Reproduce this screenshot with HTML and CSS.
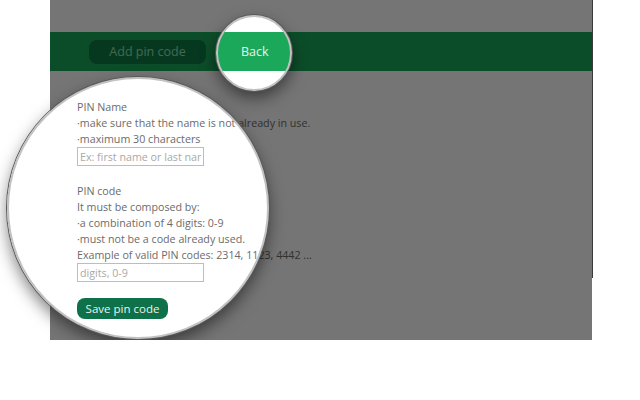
FILE: index.html
```html
<!DOCTYPE html>
<html lang="en">

<head>
    <meta charset="UTF-8">
    <meta name="viewport" content="width=device-width, initial-scale=1.0">
    <title>PIN codes</title>
    <link rel="stylesheet" href="styles.css">
</head>

<body>
    <div class="page">
        <div class="top"></div>
        <div class="nav">
            <a class="btn_add" href="javascript:;">Add pin code</a>
            <a class="btn_back" href="javascript:;">Back</a>
        </div>
        <div class="form">
            <p>PIN Name</p>
            <p>·make sure that the name is not already in use.</p>
            <p>·maximum 30 characters</p>
            <input class="field" type="text" placeholder="Ex: first name or last name">

            <p class="gap">PIN code</p>
            <p>It must be composed by:</p>
            <p>·a combination of 4 digits: 0-9</p>
            <p>·must not be a code already used.</p>
            <p>Example of valid PIN codes: 2314, 1123, 4442 ...</p>
            <input class="field" type="text" placeholder="digits, 0-9">

            <a class="btn_save" href="javascript:;">Save pin code</a>
        </div>

        <!-- 遮罩层，挖出两个圆形的放大镜区域 -->
        <div class="shade"></div>
        <div class="lens lens_big"></div>
        <div class="lens lens_small"></div>
    </div>
</body>

</html>
```

FILE: styles.css
```css
* {
    margin: 0;
    padding: 0;
    box-sizing: border-box;
}

body {
    background-color: #fff;
    font-family: "Open Sans", "Liberation Sans", sans-serif;
}

a {
    text-decoration: none;
}

.page {
    position: relative;
    width: 542px;
    height: 340px;
    margin-left: 50px;
    background-color: #fff;
}

/* 右侧细线 */
.page::after {
    content: '';
    position: absolute;
    top: 0;
    right: -1px;
    width: 1px;
    height: 278px;
    background-color: #3a3a3a;
}

.top {
    height: 32px;
}

.nav {
    display: flex;
    align-items: center;
    gap: 16px;
    height: 39px;
    padding-left: 39px;
    background-color: #1ba85a;
}

.btn_add {
    width: 117px;
    height: 24px;
    line-height: 24px;
    text-align: center;
    font-size: 12.5px;
    color: #8fe3b0;
    border-radius: 8px;
    background-color: #0f7a46;
}

.btn_back {
    padding: 0 19px;
    line-height: 39px;
    font-size: 12.5px;
    color: #e4f5ea;
}

.form {
    padding: 28px 0 0 27px;
    font-size: 10.7px;
    line-height: 16px;
    color: #6b6b6b;
}

.form .gap {
    margin-top: 17px;
}

.field {
    display: block;
    width: 127px;
    height: 19px;
    padding: 0 2px;
    border: 1px solid #bdbdbd;
    font-family: "Open Sans", "Liberation Sans", sans-serif;
    font-size: 10.7px;
    color: #6b6b6b;
    outline: none;
}

.field::placeholder {
    color: #a9a9a9;
}

.btn_save {
    display: inline-block;
    margin-top: 16px;
    width: 91px;
    height: 21px;
    line-height: 21px;
    text-align: center;
    font-size: 11.5px;
    color: #e8f4ec;
    border-radius: 8px;
    background-color: #0e7149;
}

.shade {
    position: absolute;
    top: 0;
    left: 0;
    width: 542px;
    height: 340px;
    background-color: rgba(0, 0, 0, .54);
    clip-path: path(evenodd, "M0 0H542V340H0Z M-42 208a130 130 0 1 0 260 0a130 130 0 1 0 -260 0Z M167 53a37 37 0 1 0 74 0a37 37 0 1 0 -74 0Z");
}

.lens {
    position: absolute;
    border-radius: 50%;
    border: 2px solid #c2c2c2;
    box-shadow: 0 0 0 1px #5a5a5a, 0 7px 16px rgba(0, 0, 0, .5);
}

.lens_big {
    left: -43px;
    top: 77px;
    width: 262px;
    height: 262px;
}

.lens_small {
    left: 166px;
    top: 15px;
    width: 76px;
    height: 76px;
}
```
